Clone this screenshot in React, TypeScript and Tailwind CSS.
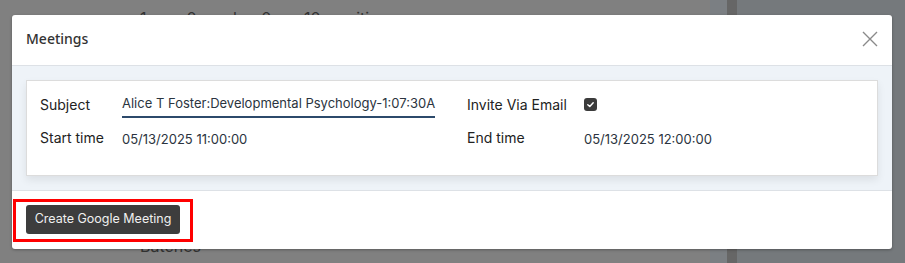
import * as React from "react";

const font = { fontFamily: "Inter, 'Noto Sans', sans-serif" };

function CloseIcon() {
  return (
    <svg width="16" height="16" viewBox="0 0 16 16" className="text-[#8a8a8a]">
      <path d="M1 1 L15 15 M15 1 L1 15" stroke="currentColor" strokeWidth="1.4" fill="none" />
    </svg>
  );
}

function CheckBox() {
  return (
    <span className="flex h-[13px] w-[13px] items-center justify-center rounded-[3px] bg-[#3b3b3b]">
      <svg width="9" height="9" viewBox="0 0 10 10">
        <path d="M2 5.2 L4.2 7.2 L8 3" stroke="white" strokeWidth="1.6" fill="none" strokeLinecap="round" strokeLinejoin="round" />
      </svg>
    </span>
  );
}

export default function App() {
  return (
    <div className="relative h-[263px] w-[905px] overflow-hidden bg-[#808080]" style={font}>
      {/* page behind the overlay */}
      <div className="flex h-full">
        <div className="flex w-[710px] flex-col justify-between pl-[140px] pt-[8px] text-[16px] text-[#333]">
          <p className="leading-[20px]">1 yes, 0 maybe, 0 no, 10 awaiting</p>
          <p className="mb-[7px] leading-[20px]">Batches</p>
        </div>
        <div className="w-[17px] bg-[#7b7f83]" />
        <div className="w-[10px] bg-[#666666]" />
        <div className="flex-1 bg-[#75797c]" />
      </div>

      {/* modal */}
      <div className="absolute left-[12px] top-[15px] flex h-[234px] w-[880px] flex-col rounded-[3px] bg-white shadow-[0_1px_3px_rgba(0,0,0,0.3)]">
        <div className="flex h-[51px] items-center justify-between border-b border-[#dde1e6] pb-[3px] pl-[14px] pr-[14px]">
          <h2 className="text-[14px] font-medium text-[#333]" style={{ fontFamily: "'Noto Sans', sans-serif" }}>
            Meetings
          </h2>
          <CloseIcon />
        </div>

        <div className="bg-[#eef3f8] px-[14px] py-[14px]">
          <div className="flex h-[96px] flex-col gap-[9px] border border-[#dcdcdc] bg-white px-[13px] pt-[10px] shadow-[0_4px_8px_rgba(0,0,0,0.08)]">
            <div className="flex items-center">
              <div className="flex w-[427px] items-center">
                <span className="w-[82px] text-[14px] text-[#222]">Subject</span>
                <span className="border-b-2 border-[#2c4a6b] pb-[2px] pt-[3px] text-[13px] text-[#2b3440]">
                  Alice T Foster:Developmental Psychology-1:07:30A
                </span>
              </div>
              <div className="flex items-center">
                <span className="w-[117px] text-[14px] text-[#222]">Invite Via Email</span>
                <CheckBox />
              </div>
            </div>
            <div className="flex items-center">
              <div className="flex w-[427px] items-center">
                <span className="w-[82px] text-[14px] text-[#222]">Start time</span>
                <span className="pt-[3px] text-[13px] text-[#2b3440]">05/13/2025 11:00:00</span>
              </div>
              <div className="flex items-center">
                <span className="w-[117px] text-[14px] text-[#222]">End time</span>
                <span className="pt-[3px] text-[13px] text-[#2b3440]">05/13/2025 12:00:00</span>
              </div>
            </div>
          </div>
        </div>

        <div className="flex flex-1 items-start border-t border-[#dde1e6] px-[14px] pt-[14px]">
          <button className="h-[29px] w-[154px] rounded-[3px] bg-[#3d3d3d] text-[12.5px] text-[#f0f0f0]">
            Create Google Meeting
          </button>
        </div>
      </div>

      {/* highlight annotation */}
      <div className="absolute left-[13px] top-[199px] h-[43px] w-[180px] border-[3px] border-[#ff0000]" />
    </div>
  );
}
